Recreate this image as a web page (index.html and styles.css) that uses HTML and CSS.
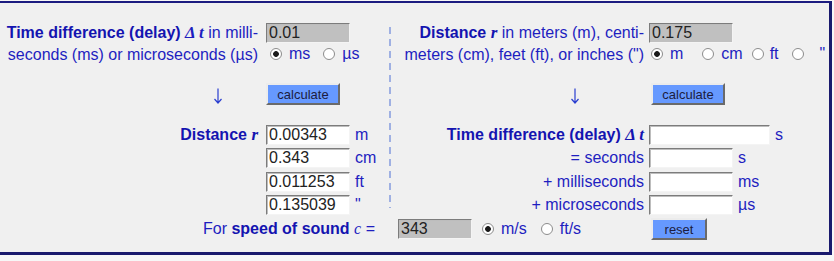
FILE: index.html
```html
<!DOCTYPE html>
<html lang="en">
<head>
    <meta charset="UTF-8">
    <title>Sound delay and distance</title>
    <link rel="stylesheet" href="styles.css">
</head>
<body>
    <div class="frame">
        <form class="calc">
            <!-- Eingabe Zeit / Eingabe Strecke -->
            <div class="label c1 two-line">
                <span><b>Time difference (delay)</b> <i class="sym">&Delta; t</i> in milli-</span>
                <span>seconds (ms) or microseconds (&micro;s)</span>
            </div>
            <div class="field c2 stack">
                <input class="inp grey" type="text" value="0.01">
                <div class="radios">
                    <label><input type="radio" name="tunit" checked>ms</label>
                    <label><input type="radio" name="tunit">&micro;s</label>
                </div>
            </div>
            <div class="sep"></div>
            <div class="label c4 two-line">
                <span><b>Distance <i class="sym">r</i></b> in meters (m), centi-</span>
                <span>meters (cm), feet (ft), or inches (")</span>
            </div>
            <div class="field c5 stack">
                <input class="inp grey" type="text" value="0.175">
                <div class="radios">
                    <label class="wide"><input type="radio" name="runit" checked>m</label>
                    <label class="narrow"><input type="radio" name="runit">cm</label>
                    <label class="tight"><input type="radio" name="runit">ft</label>
                    <label class="inch"><input type="radio" name="runit">"</label>
                </div>
            </div>

            <!-- Berechnen -->
            <div class="arrow c1 left">
                <svg width="10" height="16" viewBox="0 0 10 16"><path d="M5 0.5V15M1.5 11L5 15L8.5 11" fill="none" stroke="currentColor" stroke-width="1.2"/></svg>
            </div>
            <div class="field c2 btn-cell"><button type="button">calculate</button></div>
            <div class="arrow c4 right">
                <svg width="10" height="16" viewBox="0 0 10 16"><path d="M5 0.5V15M1.5 11L5 15L8.5 11" fill="none" stroke="currentColor" stroke-width="1.2"/></svg>
            </div>
            <div class="field c5 btn-cell"><button type="button">calculate</button></div>

            <!-- Ergebnisse -->
            <div class="label c1 row"><b>Distance <i class="sym">r</i></b></div>
            <div class="field c2 row"><input class="inp" type="text" value="0.00343"><span class="unit">m</span></div>
            <div class="label c4 row"><b>Time difference (delay) <i class="sym">&Delta; t</i></b></div>
            <div class="field c5 row"><input class="inp long" type="text"><span class="unit">s</span></div>

            <div class="field c2 row"><input class="inp" type="text" value="0.343"><span class="unit">cm</span></div>
            <div class="label c4 row">= seconds</div>
            <div class="field c5 row"><input class="inp" type="text"><span class="unit">s</span></div>

            <div class="field c2 row"><input class="inp" type="text" value="0.011253"><span class="unit">ft</span></div>
            <div class="label c4 row">+ milliseconds</div>
            <div class="field c5 row"><input class="inp" type="text"><span class="unit">ms</span></div>

            <div class="field c2 row"><input class="inp" type="text" value="0.135039"><span class="unit">"</span></div>
            <div class="label c4 row">+ microseconds</div>
            <div class="field c5 row"><input class="inp" type="text"><span class="unit">&micro;s</span></div>

            <!-- Schallgeschwindigkeit -->
            <div class="label speed-label">For <b>speed of sound</b> <i class="sym thin">c</i> =</div>
            <div class="field c4 speed">
                <input class="inp grey short" type="text" value="343">
                <div class="radios">
                    <label><input type="radio" name="cunit" checked>m/s</label>
                    <label><input type="radio" name="cunit">ft/s</label>
                </div>
            </div>
            <div class="field c5 speed"><button type="reset" class="reset">reset</button></div>
        </form>
    </div>
</body>
</html>
```
FILE: styles.css
```css
* {
    margin: 0;
    padding: 0;
    box-sizing: border-box;
}

body {
    font-family: "Liberation Sans", Arial, sans-serif;
    font-size: 16px;
    background-color: #f7f7f7;
    color: #1e1ec0;
}

.frame {
    margin: 1px 2px 0 0;
    background-color: #f0f0f0;
    border-top: 2px solid #1c1c80;
    border-right: 3px solid #1a1a6e;
    border-bottom: 3px solid #1a1a6e;
    padding: 19px 0 11px 0;
}

.calc {
    display: grid;
    grid-template-columns: 262px 125px 4px 255px 1fr;
    grid-template-rows: 44px 59px 23px 24px 23px 23px 23px;
}

.c1 { grid-column: 1; }
.c2 { grid-column: 2; }
.c4 { grid-column: 4; }
.c5 { grid-column: 5; }

b {
    color: #1414b0;
}

.sym {
    font-family: "Liberation Serif", "Times New Roman", serif;
    font-style: italic;
    font-weight: bold;
    font-size: 17px;
}

.sym.thin {
    font-weight: normal;
    font-size: 16px;
}

.label {
    text-align: right;
    white-space: nowrap;
}

.label.c1 {
    padding-right: 4px;
}

.label.c4 {
    padding-right: 2px;
}

.two-line {
    display: flex;
    flex-direction: column;
    align-items: flex-end;
    line-height: 22px;
}

.field {
    display: flex;
    align-items: flex-start;
    white-space: nowrap;
}

.field.c2 {
    padding-left: 4px;
}

.field.c5 {
    padding-left: 3px;
}

.stack {
    flex-direction: column;
}

.stack .inp {
    margin-top: 1px;
}

/* Eingabefelder */
.inp {
    width: 84px;
    height: 20px;
    padding: 0 2px;
    font-family: inherit;
    font-size: 16px;
    color: #222222;
    background-color: #ffffff;
    border: 1px solid;
    border-color: #7c7c7c #f4f4f4 #f4f4f4 #7c7c7c;
    box-shadow: inset 1px 1px 0 #bdbdbd;
    outline: none;
}

.inp.grey {
    background-color: #c0c0c0;
}

.inp.long {
    width: 121px;
}

.inp.short {
    width: 74px;
}

.unit {
    margin-left: 5px;
    line-height: 20px;
}

.radios {
    display: flex;
    align-items: center;
    height: 22px;
    padding-left: 4px;
}

.radios label {
    display: flex;
    align-items: center;
    gap: 7px;
    margin-right: 13px;
}

.radios label.wide {
    margin-right: 19px;
}

.radios label.narrow {
    margin-right: 9px;
}

.radios label.tight {
    gap: 6px;
}

.radios label.inch {
    gap: 16px;
}

input[type="radio"] {
    appearance: none;
    -webkit-appearance: none;
    width: 12px;
    height: 12px;
    margin: 0;
    border: 1px solid #8c8c8c;
    border-radius: 50%;
    background-color: #ffffff;
}

input[type="radio"]:checked {
    background: radial-gradient(circle, #1a1a1a 0 2.5px, #ffffff 3.2px);
}

.c5 .radios {
    padding-left: 2px;
}

/* Knoepfe */
.btn-cell {
    padding-top: 17px;
}

.field.c5.btn-cell {
    padding-left: 5px;
}

button {
    height: 22px;
    width: 74px;
    font-family: inherit;
    font-size: 13px;
    color: #1c1c40;
    background-color: #6699ff;
    border: 2px solid;
    border-color: #ececec #6a6a6a #6a6a6a #ececec;
    cursor: pointer;
}

button.reset {
    width: 56px;
    margin-left: 2px;
}

.arrow {
    display: flex;
    justify-content: flex-end;
    padding-top: 22px;
    color: #2a3ed0;
}

.arrow svg {
    display: block;
}

.arrow.left {
    padding-right: 39px;
}

.arrow.right {
    padding-right: 66px;
}

.row {
    line-height: 20px;
}

/* Trennlinie */
.sep {
    grid-column: 3;
    grid-row: 1 / 7;
    width: 2px;
    margin: 5px 0 10px 2px;
    background: repeating-linear-gradient(to bottom, #9fb0e2 0 7px, transparent 7px 12px);
}

.speed-label {
    grid-column: 1 / 3;
    padding-right: 12px;
    line-height: 22px;
}

.speed {
    align-items: center;
    height: 22px;
}

.speed .inp {
    margin-left: 7px;
}

.speed .radios {
    padding-left: 10px;
}

.speed .radios label {
    margin-right: 14px;
}
```
